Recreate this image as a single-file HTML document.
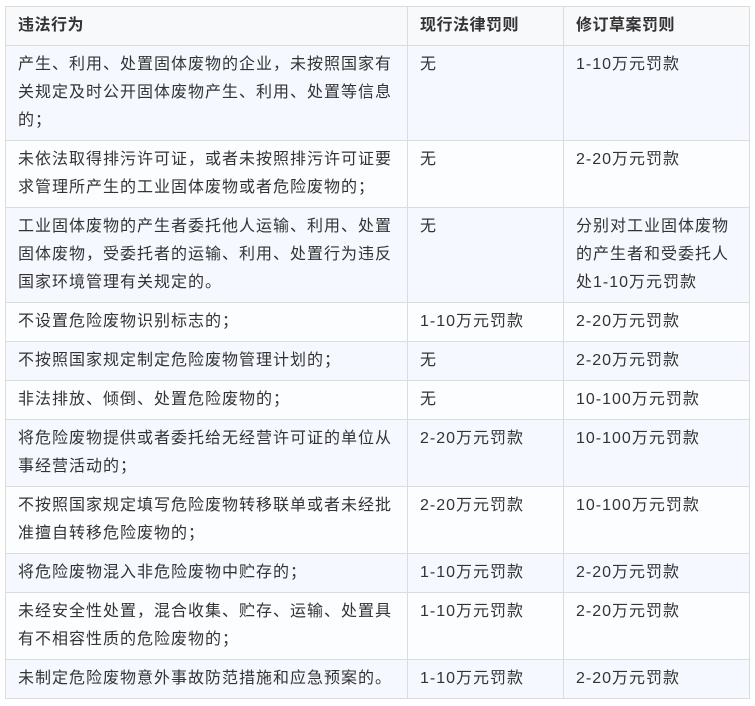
<html><head><style>
body{margin:0;background:#fff;font-family:"Liberation Sans","Noto Sans CJK SC",sans-serif;}
table{position:absolute;left:5px;top:6px;border-collapse:collapse;width:744px;table-layout:fixed;font-size:16px;color:#333;}
td,th{border:1px solid #dcdcdc;padding:5px 12px;line-height:28px;height:28px;vertical-align:top;text-align:left;white-space:nowrap;overflow:hidden;letter-spacing:1px;}
th{font-weight:bold;background:#f8f9fb;letter-spacing:0.5px;}
tr:nth-child(odd) td{background:#fcfdff;}
tr:nth-child(even) td{background:#f5f9ff;}
</style></head><body>
<table>
<colgroup><col style="width:402px"><col style="width:156px"><col style="width:186px"></colgroup>
<tr><th>违法行为</th><th>现行法律罚则</th><th>修订草案罚则</th></tr>
<tr><td>产生、利用、处置固体废物的企业，未按照国家有<br>关规定及时公开固体废物产生、利用、处置等信息<br>的；</td><td>无</td><td>1-10万元罚款</td></tr>
<tr><td>未依法取得排污许可证，或者未按照排污许可证要<br>求管理所产生的工业固体废物或者危险废物的；</td><td>无</td><td>2-20万元罚款</td></tr>
<tr><td>工业固体废物的产生者委托他人运输、利用、处置<br>固体废物，受委托者的运输、利用、处置行为违反<br>国家环境管理有关规定的。</td><td>无</td><td>分别对工业固体废物<br>的产生者和受委托人<br>处1-10万元罚款</td></tr>
<tr><td>不设置危险废物识别标志的；</td><td>1-10万元罚款</td><td>2-20万元罚款</td></tr>
<tr><td>不按照国家规定制定危险废物管理计划的；</td><td>无</td><td>2-20万元罚款</td></tr>
<tr><td>非法排放、倾倒、处置危险废物的；</td><td>无</td><td>10-100万元罚款</td></tr>
<tr><td>将危险废物提供或者委托给无经营许可证的单位从<br>事经营活动的；</td><td>2-20万元罚款</td><td>10-100万元罚款</td></tr>
<tr><td>不按照国家规定填写危险废物转移联单或者未经批<br>准擅自转移危险废物的；</td><td>2-20万元罚款</td><td>10-100万元罚款</td></tr>
<tr><td>将危险废物混入非危险废物中贮存的；</td><td>1-10万元罚款</td><td>2-20万元罚款</td></tr>
<tr><td>未经安全性处置，混合收集、贮存、运输、处置具<br>有不相容性质的危险废物的；</td><td>1-10万元罚款</td><td>2-20万元罚款</td></tr>
<tr><td>未制定危险废物意外事故防范措施和应急预案的。</td><td>1-10万元罚款</td><td>2-20万元罚款</td></tr>
</table>
</body></html>
